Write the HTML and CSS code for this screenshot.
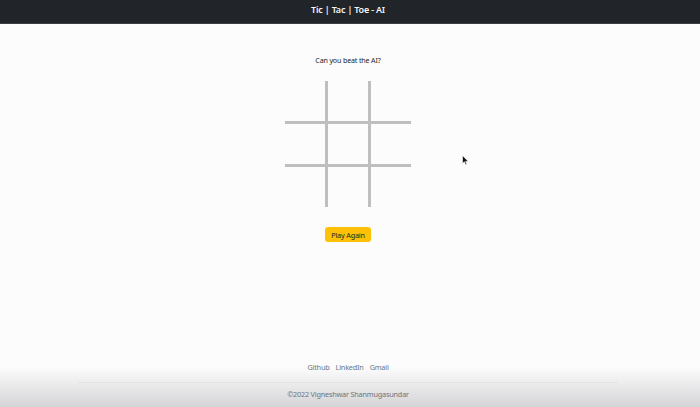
FILE: index.html
```html
<!DOCTYPE html>
<html lang="en">
<head>
<meta charset="utf-8">
<title>Tic | Tac | Toe - AI</title>
<link rel="stylesheet" href="styles.css">
</head>
<body>
<header class="navbar">
  <span class="brand">Tic | Tac | Toe - AI</span>
</header>
<main class="game">
  <p class="prompt">Can you beat the AI?</p>
  <div class="board">
    <div class="cell"></div><div class="cell"></div><div class="cell"></div>
    <div class="cell"></div><div class="cell"></div><div class="cell"></div>
    <div class="cell"></div><div class="cell"></div><div class="cell"></div>
  </div>
  <button class="btn-play">Play Again</button>
</main>
<footer class="footer">
  <div class="container">
    <ul class="links">
      <li><a href="#">Github</a></li>
      <li><a href="#">LinkedIn</a></li>
      <li><a href="#">Gmail</a></li>
    </ul>
    <p class="copy">©2022 Vigneshwar Shanmugasundar</p>
  </div>
</footer>
<svg class="cursor" width="7" height="11" viewBox="0 0 7 11"><path d="M0.5 0.5 L0.5 8.5 L2.4 6.8 L3.6 9.8 L4.8 9.3 L3.6 6.4 L6.2 6.4 Z" fill="#111" stroke="#fff" stroke-width="0.6"/></svg>
</body>
</html>
```
FILE: styles.css
```css
html, body {
  margin: 0;
  padding: 0;
}
body {
  min-height: 100vh;
  display: flex;
  flex-direction: column;
  background: #fdfcfd;
  font-family: "Noto Sans", "Open Sans", sans-serif;
  color: #212529;
}
.navbar {
  height: 23px;
  padding-right: 4px;
  background: #212529;
  border-bottom: 1px solid #3c3f43;
  display: flex;
  align-items: center;
  justify-content: center;
}
.brand {
  color: #f4f4f5;
  font-size: 9px;
  font-weight: 600;
  letter-spacing: -0.2px;
  margin-top: -4px;
}
.game {
  flex: 1;
  padding-right: 4px;
  display: flex;
  flex-direction: column;
  align-items: center;
}
.prompt {
  margin: 30px 0 0;
  font-size: 7.1px;
  letter-spacing: -0.15px;
  line-height: 12px;
  color: #1a1d20;
}
.board {
  margin-top: 15px;
  display: grid;
  grid-template-columns: repeat(3, 40px);
  grid-template-rows: repeat(3, 40px);
  gap: 3px;
  background: #bfbfbf;
}
.cell {
  background: #fdfcfd;
}
.btn-play {
  margin-top: 20px;
  background: #ffc107;
  border: 0;
  border-radius: 3px;
  padding: 0 6px;
  height: 15px;
  font-family: inherit;
  font-size: 7.3px;
  letter-spacing: -0.2px;
  color: #212529;
  cursor: pointer;
}
.footer {
  padding: 5px 4px 0 0;
  background: linear-gradient(to bottom, #fdfcfd 0%, #fdfcfd 32%, #d4d4d6 100%);
}
.container {
  width: 540px;
  margin: 0 auto;
}
.links {
  list-style: none;
  margin: 0;
  padding: 0 0 7px;
  display: flex;
  justify-content: center;
  gap: 6px;
  border-bottom: 1px solid #e2e2e4;
}
.links a {
  color: #6c757d;
  text-decoration: none;
  font-size: 7.3px;
  letter-spacing: -0.2px;
  line-height: 16px;
}
.copy {
  margin: 0;
  padding: 3px 0 5px;
  text-align: center;
  color: #6c757d;
  font-size: 7.3px;
  letter-spacing: -0.2px;
  line-height: 16px;
}
.cursor {
  position: absolute;
  left: 462px;
  top: 155px;
}
```
